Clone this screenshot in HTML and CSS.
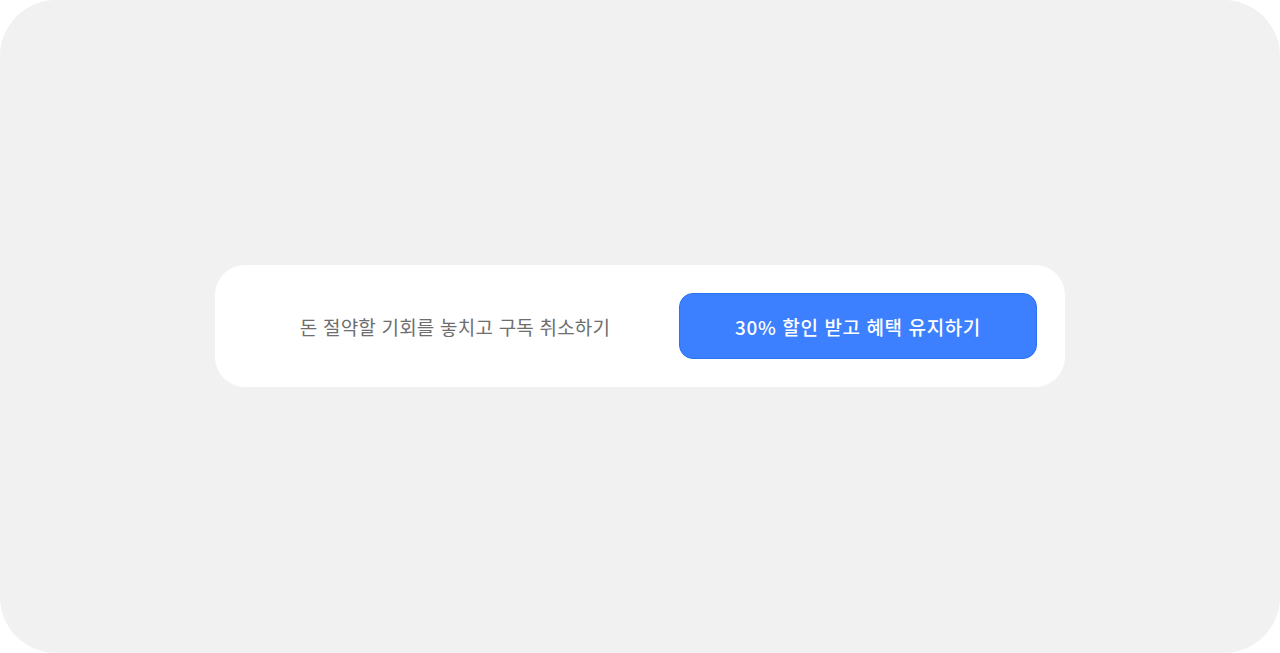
FILE: index.html
```
<!DOCTYPE html>
<html lang="ko">
<head>
<meta charset="utf-8">
<link rel="stylesheet" href="styles.css">
</head>
<body>
<div class="frame">
  <div class="card">
    <button class="btn btn-cancel">돈 절약할 기회를 놓치고 구독 취소하기</button>
    <button class="btn btn-keep">30% 할인 받고 혜택 유지하기</button>
  </div>
</div>
</body>
</html>
```
FILE: styles.css
```
html, body {
  margin: 0;
  padding: 0;
  background: #ffffff;
}
.frame {
  width: 1280px;
  height: 653px;
  background: #f1f1f1;
  border-radius: 56px;
  display: flex;
  align-items: center;
  justify-content: center;
}
.card {
  width: 850px;
  height: 122px;
  box-sizing: border-box;
  background: #ffffff;
  border-radius: 30px;
  padding: 28px;
  display: flex;
  gap: 12px;
  margin-top: -1px;
}
.btn {
  font-family: "Noto Sans CJK KR", "Noto Sans", sans-serif;
  font-size: 19px;
  border: none;
  height: 66px;
  border-radius: 14px;
  cursor: pointer;
  padding: 0;
}
.btn-cancel {
  flex: 1;
  background: transparent;
  color: #6e6e6e;
  font-weight: 400;
  letter-spacing: 0.2px;
}
.btn-keep {
  width: 358px;
  background: #3d80ff;
  border: 1px solid #2a72f0;
  color: #ffffff;
  font-weight: 500;
  letter-spacing: 0.6px;
}
```
